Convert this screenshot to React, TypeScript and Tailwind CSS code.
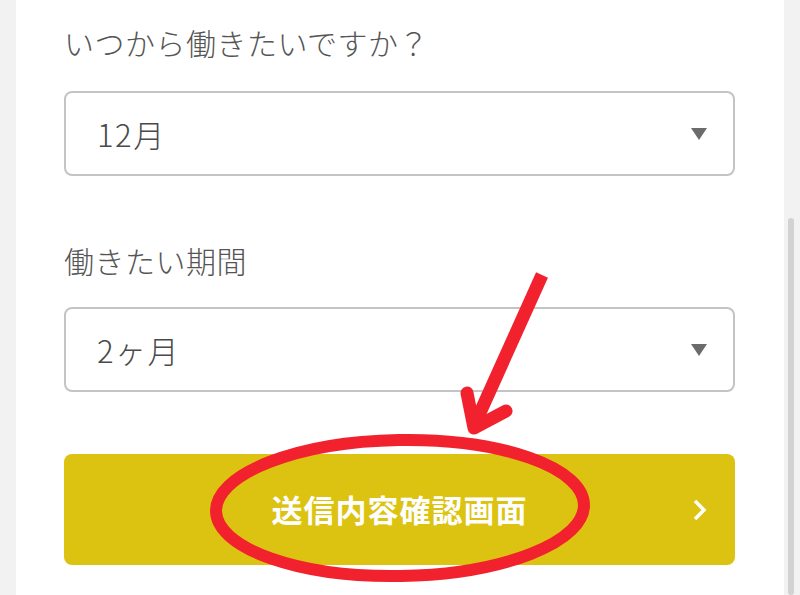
function Caret() {
  return (
    <svg width="16" height="12" viewBox="0 0 16 12" className="shrink-0">
      <path d="M0 0 H16 L8 12 Z" fill="#6b6b6b" />
    </svg>
  );
}

function SelectBox({ value }: { value: string }) {
  return (
    <div className="h-[85px] w-full rounded-[8px] border-2 border-[#c4c4c4] bg-white flex items-center justify-between pl-[31px] pr-[26px]">
      <span className="text-[31px] font-light leading-none text-[#4a4a4a] tracking-[1.5px]">{value}</span>
      <Caret />
    </div>
  );
}

function Overlay() {
  return (
    <svg
      className="absolute inset-0 pointer-events-none"
      width="800"
      height="595"
      viewBox="0 0 800 595"
    >
      <ellipse
        cx="400"
        cy="508"
        rx="184"
        ry="68"
        fill="none"
        stroke="#f2212e"
        strokeWidth="12"
        transform="rotate(-1 400 508)"
      />
      <path
        d="M542 275 L474 426"
        stroke="#f2212e"
        strokeWidth="13"
        fill="none"
      />
      <path
        d="M467 393 L474 428 L506 411"
        stroke="#f2212e"
        strokeWidth="13"
        strokeLinecap="round"
        strokeLinejoin="round"
        fill="none"
      />
    </svg>
  );
}

export default function App() {
  return (
    <div className="relative w-[800px] h-[595px] overflow-hidden bg-[#f2f2f2] flex font-['Noto_Sans_CJK_JP','Noto_Sans',sans-serif]">
      <div className="w-[16px] shrink-0" />
      <main className="w-[768px] bg-white pl-[48px] pr-[49px] pt-[22px] flex flex-col">
        <label className="text-[30px] font-light leading-[40px] text-[#555] tracking-[0.5px]">
          いつから働きたいですか？
        </label>
        <div className="mt-[29px]">
          <SelectBox value="12月" />
        </div>
        <label className="mt-[64px] text-[30px] font-light leading-[40px] text-[#555] tracking-[0.5px]">
          働きたい期間
        </label>
        <div className="mt-[27px]">
          <SelectBox value="2ヶ月" />
        </div>
        <button className="mt-[62px] h-[111px] w-full rounded-[8px] bg-[#dcc312] relative flex items-center justify-center">
          <span className="text-[31px] font-bold text-white tracking-[1px]">送信内容確認画面</span>
          <svg
            className="absolute right-[27px] top-1/2 -translate-y-1/2"
            width="16"
            height="24"
            viewBox="0 0 16 24"
          >
            <path d="M3 3 L12 12 L3 21" stroke="#fff" strokeWidth="3.5" fill="none" />
          </svg>
        </button>
      </main>
      <div className="w-[16px] shrink-0 flex flex-col pt-[218px]">
        <div className="ml-[4px] w-[6px] flex-1 rounded-full bg-[#d2d2d2]" />
      </div>
      <Overlay />
    </div>
  );
}
